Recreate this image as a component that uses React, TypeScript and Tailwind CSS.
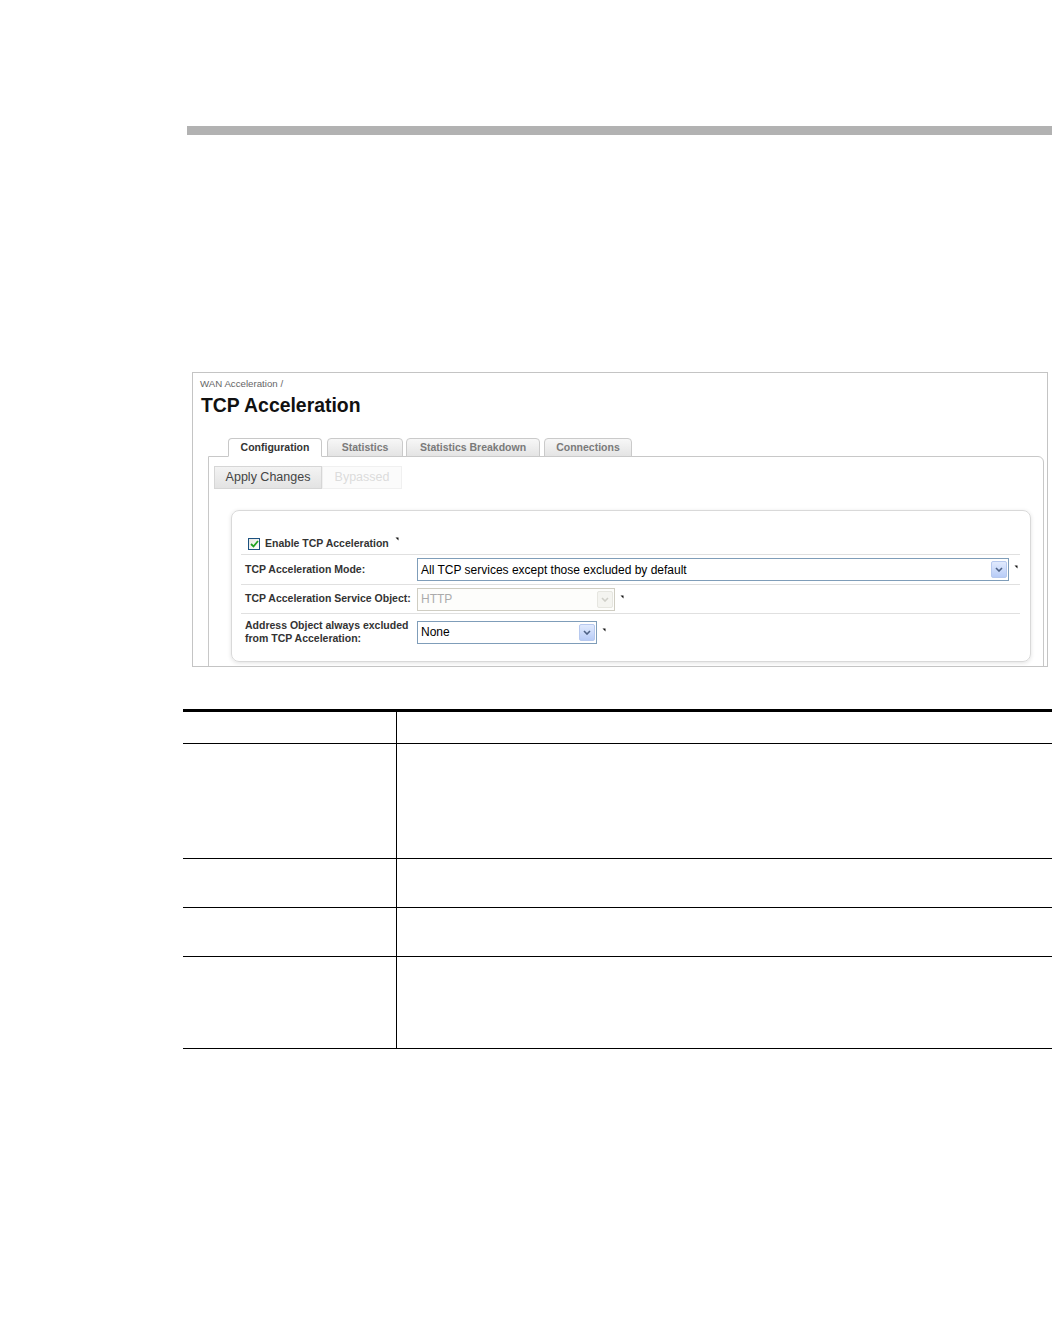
import React from 'react'

const ui = { fontFamily: '"Liberation Sans", Arial, sans-serif' }

function Mark({ up }: { up?: boolean }) {
  return (
    <svg width="4" height="5" viewBox="0 0 4 5" className={up ? 'ml-[6px] -mt-[8px]' : 'ml-[5px] -mt-[4px]'}>
      <path d="M0.5 0.5 L3.5 0.5 L3.5 3.5 Z" fill="#111" />
    </svg>
  )
}

function Arrow({ disabled }: { disabled?: boolean }) {
  return (
    <div className={`w-[16px] h-[17px] mr-[1px] rounded-[2px] border flex items-center justify-center ${disabled ? 'border-[#e6e6e0] bg-[#f4f4f0]' : 'border-[#b7c9ef] bg-gradient-to-b from-[#e1eafd] to-[#b8ccf7]'}`}>
      <svg width="8" height="5" viewBox="0 0 8 5">
        <path d="M1 1 L4 4 L7 1" fill="none" stroke={disabled ? '#cfcfc8' : '#4d6185'} strokeWidth="1.6" />
      </svg>
    </div>
  )
}

function Select({ w, text, disabled }: { w: string; text: string; disabled?: boolean }) {
  return (
    <div className={`${w} h-[23px] border flex items-center justify-between ${disabled ? 'border-[#cfcdc2] bg-[#fdfdfb] text-[#ababab]' : 'border-[#7f9db9] bg-white text-black'}`}>
      <span className="pl-[3px] text-[12px]">{text}</span>
      <Arrow disabled={disabled} />
    </div>
  )
}

const tabs = [
  { label: 'Configuration', cls: 'w-[94px]', active: true },
  { label: 'Statistics', cls: 'w-[76px] ml-[5px]' },
  { label: 'Statistics Breakdown', cls: 'w-[134px] ml-[3px]' },
  { label: 'Connections', cls: 'w-[88px] ml-[4px]' },
]

export default function App() {
  return (
    <div className="w-[1052px] h-[1332px] bg-white overflow-hidden" style={ui}>
      {/* header rule */}
      <div className="ml-[187px] mt-[126px] h-[9px] bg-[#b2b2b2]" />

      {/* screenshot */}
      <div className="ml-[192px] mt-[237px] w-[856px] h-[295px] border border-[#c4c4c4] overflow-hidden">
        <div className="pl-[7px] pt-[5px] text-[9.7px] leading-[12px] text-[#666]">WAN Acceleration /</div>
        <div className="pl-[8px] mt-[4px] text-[19.4px] leading-[22px] font-bold text-[#111]">TCP Acceleration</div>

        <div className="mt-[22px] pl-[35px] flex items-end -mb-px relative z-10">
          {tabs.map(t => (
            <div key={t.label} className={`${t.cls} h-[19px] border rounded-t-[4px] flex items-center justify-center text-[10.5px] font-bold ${t.active ? 'border-[#c8c8c8] border-b-white bg-white text-[#333]' : 'border-[#cacaca] bg-gradient-to-b from-[#f7f7f7] to-[#e4e4e4] text-[#7a7a7a]'}`}>
              {t.label}
            </div>
          ))}
        </div>

        <div className="ml-[15px] mr-[3px] h-[260px] border border-[#c8c8c8] rounded-tr-[6px] bg-white">
          <div className="flex ml-[5px] mt-[9px]">
            <div className="w-[108px] h-[23px] border border-[#d6d6d6] bg-gradient-to-b from-[#f3f3f3] to-[#e3e3e3] flex items-center justify-center text-[12.5px] text-[#444]">Apply Changes</div>
            <div className="w-[80px] h-[23px] border border-[#f0f0f0] bg-[#fbfbfb] flex items-center justify-center text-[12.5px] text-[#dcdcdc]">Bypassed</div>
          </div>

          <div className="ml-[22px] mt-[21px] w-[800px] h-[152px] border border-[#d9d9d9] rounded-[8px] shadow-[0_1px_4px_rgba(0,0,0,0.12)] pl-[9px] pr-[10px]">
            <div className="mt-[22px] h-[22px] border-b border-[#e0e0e0] flex items-center pl-[7px]">
              <div className="w-[12px] h-[12px] border border-[#1c5180] bg-gradient-to-br from-[#e6e6e0] to-white flex items-center justify-center">
                <svg width="9" height="8" viewBox="0 0 9 8"><path d="M1 4 L3.5 6.5 L8 1" fill="none" stroke="#21a121" strokeWidth="1.8" /></svg>
              </div>
              <span className="ml-[5px] text-[10.5px] font-bold text-[#333]">Enable TCP Acceleration</span>
              <Mark up />
            </div>

            <div className="h-[30px] border-b border-[#e0e0e0] flex items-center">
              <div className="w-[176px] pl-[4px] text-[10.5px] font-bold text-[#333]">TCP Acceleration Mode:</div>
              <Select w="w-[592px]" text="All TCP services except those excluded by default" />
              <Mark />
            </div>

            <div className="h-[29px] border-b border-[#e0e0e0] flex items-center">
              <div className="w-[176px] pl-[4px] text-[10.5px] font-bold text-[#333]">TCP Acceleration Service Object:</div>
              <Select w="w-[198px]" text="HTTP" disabled />
              <Mark />
            </div>

            <div className="h-[36px] flex items-center">
              <div className="w-[176px] pl-[4px] text-[10.5px] leading-[13px] font-bold text-[#333]">Address Object always excluded<br />from TCP Acceleration:</div>
              <Select w="w-[180px]" text="None" />
              <Mark />
            </div>
          </div>
        </div>
      </div>

      {/* table */}
      <div className="ml-[183px] mt-[42px] w-[869px] border-t-[3px] border-black">
        {[32, 115, 49, 49, 92].map((h, i) => (
          <div key={i} className="grid grid-cols-[214px_1fr] border-b-[1.5px] border-black" style={{ height: h }}>
            <div className="border-r-[1.5px] border-black" />
            <div />
          </div>
        ))}
      </div>
    </div>
  )
}
